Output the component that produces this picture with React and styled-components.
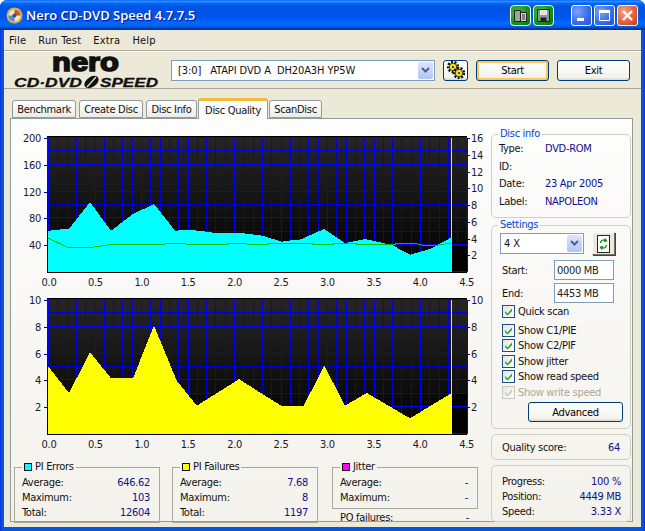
import React from "react";
import styled, { createGlobalStyle } from "styled-components";

const UI = `"DejaVu Sans Condensed", "Liberation Sans", sans-serif`;
const TXT = `11px ${UI}`;
const NAVY = "#10108a";

const Global = createGlobalStyle`
  html, body { margin: 0; padding: 0; background: #fff; }
  body { width: 645px; height: 531px; overflow: hidden; font: ${TXT}; letter-spacing: -0.3px; color: #111; }
  * { box-sizing: border-box; }
  button { letter-spacing: inherit; }
`;

const Win = styled.div`
  width: 645px; height: 531px; display: flex; flex-direction: column;
  background: linear-gradient(90deg, #0831d9 0, #0855dd 2px, #0855dd 643px, #0831d9 645px);
  border-radius: 7px 7px 0 0; overflow: hidden;
`;
const TitleBar = styled.div`
  height: 30px; flex: none; display: flex; align-items: center; padding: 0 7px 0 6px;
  background: linear-gradient(180deg,#0058ee 0%,#3593ff 4%,#288eff 6%,#127dff 8%,#036ffc 10%,#0262ee 14%,#0057e5 20%,#0054e3 24%,#0055eb 56%,#005bf5 66%,#026afe 76%,#0062ef 86%,#0052d6 92%,#0040ab 94%,#003092 100%);
`;
const TitleText = styled.div`
  margin-left: 3px; flex: 1; color: #fff; font: 600 13px "Open Sans", sans-serif; letter-spacing: 0;
  text-shadow: 1px 1px 1px #0f1089;
`;
const SkinBtn = styled.div`
  width: 21px; height: 21px; border: 1px solid #fff; border-radius: 4px; margin-right: ${p => p.$mr || 2}px;
  display: flex; align-items: center; justify-content: center;
  background: radial-gradient(circle at 35% 35%, #4cc04c, #0e8a12 70%, #066a0a);
`;
const CtlBtn = styled.div`
  width: 21px; height: 21px; border: 1px solid #fff; border-radius: 3px; margin-left: 2px;
  display: flex; align-items: center; justify-content: center;
  background: ${p => p.$close
    ? "radial-gradient(circle at 30% 30%, #f0a58c, #e2633f 55%, #c23a1c)"
    : "radial-gradient(circle at 30% 30%, #7fa4f5, #3b6fe6 55%, #2350cf)"};
`;
const Client = styled.div`
  margin: 0 4px 4px; flex: 1; background: #ece9d8; display: flex; flex-direction: column;
`;
const MenuBar = styled.div`
  height: 21px; flex: none; display: flex; align-items: center; padding: 0 5px; gap: 12px;
  border-bottom: 1px solid #aca899; letter-spacing: 0.2px;
`;
const Toolbar = styled.div`
  height: 38px; flex: none; display: flex; align-items: center; padding-left: 10px;
  border-top: 1px solid #fff; border-bottom: 1px solid #aca899;
`;
const Logo = styled.svg`
  width: 157px; height: 37px; flex: none; display: block; overflow: visible;
  text { letter-spacing: 0; font-family: "Liberation Sans", sans-serif; font-weight: 700; fill: #111; stroke: #111; }
`;
const LogoMark = styled.text`font-size: 25px; stroke-width: 1.5px;`;
const LogoLine = styled.text`font-size: 12.5px; font-style: italic; stroke-width: 0.3px;`;
const Combo = styled.div`
  width: ${p => p.$w}px; height: 21px; flex: none; display: flex; align-items: center;
  background: #fff; border: 1px solid #7f9db9; padding: 0 1px 0 ${p => p.$pl}px; letter-spacing: -0.1px;
  span { flex: 1; white-space: pre; }
`;
const ComboArrow = styled.div`
  width: 15px; height: 17px; border-radius: 2px; display: flex; align-items: center; justify-content: center;
  background: linear-gradient(180deg, #dbe5fd, #b0c6f7);
`;
const XpBtn = styled.button`
  width: ${p => p.$w}px; height: ${p => p.$h || 21}px; flex: none; padding: 0; margin: ${p => p.$mt || 0}px 0 0 ${p => p.$ml || 0}px;
  border: 1px solid #003c74; border-radius: 3px; font: ${TXT}; color: #000;
  display: flex; align-items: center; justify-content: center;
  background: linear-gradient(180deg, #fff, #f4f3ee 85%, #dcd8ca);
  box-shadow: ${p => p.$def ? "inset 0 0 0 2px #fbc761" : "none"};
`;
const Tabs = styled.div`
  height: 30px; flex: none; padding: 9px 0 0 8px; display: flex; align-items: flex-end;
  margin-bottom: -1px; position: relative; z-index: 1;
`;
const Tab = styled.div`
  width: ${p => p.$w}px; height: ${p => p.$on ? 21 : 18}px; margin-right: ${p => p.$mr}px;
  margin-bottom: ${p => p.$on ? 0 : 1}px; white-space: nowrap;
  border: 1px solid #919b9c; border-bottom: ${p => p.$on ? "0" : "1px solid #919b9c"};
  border-radius: 3px 3px 0 0; display: flex; align-items: center; justify-content: center;
  background: ${p => p.$on ? "#fcfcfb" : "linear-gradient(180deg,#fff,#ecebe6)"};
  ${p => p.$on && "border-top: 3px solid #f6b73c;"}
`;
const Panel = styled.div`
  width: 623px; margin-left: 6px; height: 404px; flex: none; display: flex; border: 1px solid #919b9c;
  background: linear-gradient(180deg, #fdfdfd, #f4f2ec);
`;
const LeftCol = styled.div`width: 480px; flex: none; padding-top: 10px;`;
const Chart = styled.svg`
  display: block; width: 478px; height: 160px; margin-left: 1px;
  text { font: ${TXT}; fill: #1a1a2c; }
`;
const StatsRow = styled.div`display: flex; padding-left: 3px; margin-top: 11px; align-items: flex-start;`;
const StatCol = styled.div`width: 146px; margin-right: ${p => p.$mr || 0}px; flex: none;`;
const StatBox = styled.fieldset`
  margin: 0; padding: 1px 9px 0 7px; width: 146px; height: ${p => p.$h}px; min-width: 0;
  border: 1px solid #aca899;
  legend { padding: 0 2px; margin-left: 0; height: 14px; display: flex; align-items: center; gap: 3px; line-height: 14px; }
`;
const Swatch = styled.i`width: 8px; height: 8px; border: 1px solid #111; background: ${p => p.$c}; display: block;`;
const KV = styled.div`
  height: ${p => p.$h || 15}px; display: flex; justify-content: space-between; align-items: center;
  padding: ${p => p.$pad || "0"};
  b { font-weight: 400; color: ${NAVY}; }
`;
const Side = styled.div`width: 140px; flex: none; padding-top: 8px;`;
const Group = styled.fieldset`
  margin: ${p => p.$mt || 0}px 0 0; width: 140px; height: ${p => p.$h}px; min-width: 0;
  border: 1px solid #d0d0bf; border-radius: 5px; padding: ${p => p.$pad};
  legend { padding: 0 2px; margin: 0 0 ${p => p.$lb || 0}px -1px; color: #0046d5; line-height: 14px; height: 14px; }
`;
const InfoRow = styled.div`
  height: 17.6px; display: flex; align-items: center;
  span { width: 46px; flex: none; }
  b { font-weight: 400; color: ${NAVY}; }
`;
const SpeedRow = styled.div`display: flex; align-items: center; padding-left: 1px;`;
const Bevel = styled.div`
  width: 23px; height: 23px; margin-left: 8px; display: flex; align-items: center; justify-content: center;
  background: #ece9d8; border: 1px solid; border-color: #fff #716f64 #716f64 #fff; box-shadow: 1px 1px 0 #444;
`;
const FieldRow = styled.div`
  display: flex; align-items: center; margin-top: ${p => p.$mt}px; padding-left: 3px;
  span { width: 52px; flex: none; }
`;
const Field = styled.div`
  width: 60px; height: 20px; background: #fff; border: 1px solid #7f9db9; padding-left: 2px; display: flex; align-items: center;
  color: #222;
`;
const CheckRow = styled.div`
  height: 15.5px; margin-top: ${p => p.$mt || 0}px; display: flex; align-items: center; padding-left: 3px; gap: 3px;
  color: ${p => p.$off ? "#aca899" : "#111"};
`;
const Box = styled.span`
  width: 13px; height: 13px; flex: none; display: flex; align-items: center; justify-content: center;
  border: 1px solid ${p => p.$off ? "#c9c7ba" : "#1c5180"};
  background: linear-gradient(135deg, #e4e4df, #fff);
`;

const Check = ({ off }) => (
  <Box $off={off}>
    <svg width="9" height="9" viewBox="0 0 9 9"><path d="M1 4l2.500 2.500L8 1.500v2.500L3.500 8.500 1 6z" fill={off ? "#c9c7ba" : "#21a121"} /></svg>
  </Box>
);
const Chevron = () => (
  <svg width="9" height="7" viewBox="0 0 9 7"><path d="M1 1l3.500 3.500L8 1" fill="none" stroke="#4d6185" strokeWidth="2" /></svg>
);

const cyan = "47.7,273 47.7,232 55,231 69,229.7 90,203.3 111,231.7 133,215 154,205 175,231.7 187,231 200,231.7 215,234 245,234.500 262,236.7 282,242.7 288,241.7 300,240.7 324,230 345,244 365,240 392,246 410,255.7 430,250 451.7,238.3 451.7,273";
const green = "47.7,239 68,248.3 91.7,248.3 110,245.7 163,245.7 167,244.3 185,244.3 187,245.7 227,245.7 228,244.3 245,244.3 248,245.3 268,245.3 270,244.3 312,244.3 313,245.3 333,245.3 335,244.3 355,244.3 357,245.3 392,246 398,244.3 415,244.3 425,246.7 435,246.7 448,244.3 451,244.3";
const yellow = "47.7,435 47.7,366.7 69,394 90,353.3 111,379.3 133,379.3 154,326.7 176.7,381.7 196.7,406.7 239.3,380 245,384 281,406.7 303.7,406.7 324.3,366.7 345,406.7 366.7,394 410,419.3 451.7,394 451.7,435";
const xVals = ["0.0","0.5","1.0","1.5","2.0","2.5","3.0","3.5","4.0","4.5"];

const Plot = ({ id, vy, top, bottom, left, right, area, fill, line, whiteTo, clearFrom, keep }) => {
  const H = bottom - top - 2;
  const step = H / 10;
  const xs = Array.from({ length: 46 }, (_, i) => i);
  const ys = Array.from({ length: 11 }, (_, i) => i);
  const major = "#0000ff";
  const minor = "#0000d8";
  return (
    <Chart viewBox={`12 ${vy} 478 160`}>
      <defs>
        <linearGradient id={id} x1="0" y1="0" x2="0" y2="1">
          <stop offset="0" stopColor="#262626" /><stop offset="1" stopColor="#000" />
        </linearGradient>
      </defs>
      <rect x="47" y={top} width="420" height={bottom - top + 1} fill={`url(#${id})`} />
      <rect x="47" y={top} width="420" height="2" fill="#000" />
      <g shapeRendering="crispEdges">
        {xs.map(i => {
          const x = Math.round(48 + i * 9.3) + 0.5;
          return <line key={i} x1={x} x2={x} y1={top + 2} y2={bottom} stroke={i % 5 === 0 ? major : minor} />;
        })}
        {ys.map(i => {
          const y = Math.round(top + 2 + i * step) - 0.5;
          return <line key={i} x1="47" x2="467" y1={y} y2={y} stroke={i % 2 === 0 ? major : minor} />;
        })}
        <rect x="452" y={clearFrom} width="15" height={bottom - clearFrom} fill="#000" />
        <line x1="452" x2="467" y1={keep} y2={keep} stroke={major} />
        <line x1="452" x2="467" y1={bottom - 0.5} y2={bottom - 0.5} stroke={major} />
        <polygon points={area} fill={fill} />
        {line && <polyline points={line} fill="none" stroke="#00c000" />}
        <line x1="451.5" x2="451.5" y1={top + 2} y2={whiteTo} stroke="#d8d8d8" />
        <line x1="47" x2="467" y1={bottom + 0.5} y2={bottom + 0.5} stroke="#000" />
        {right.map((v, i) => {
          const y = Math.round(top + 2 + H * (i / right.length)) + 0.5;
          return <line key={v} x1="467" x2="470" y1={y} y2={y} stroke="#000090" />;
        })}
        {left.map((v, i) => {
          const y = Math.round(top + 2 + H * (i / left.length)) + 0.5;
          return <line key={v} x1="44" x2="47" y1={y} y2={y} stroke="#000090" />;
        })}
      </g>
      {left.map((v, i) => (
        <text key={v} x="41" y={top + 6 + i * (H / left.length)} textAnchor="end">{v}</text>
      ))}
      {right.map((v, i) => (
        <text key={v} x="471" y={top + 6 + H * (i / right.length)}>{v}</text>
      ))}
      {xVals.map((v, i) => (
        <text key={v} x={49 + i * 46.4} y={bottom + 13.5} textAnchor="middle">{v}</text>
      ))}
    </Chart>
  );
};

const Stat = ({ c, title, rows, h }) => (
  <StatBox $h={h}>
    <legend><Swatch $c={c} />{title}</legend>
    {rows.map(([k, v]) => <KV key={k}><span>{k}</span><b>{v}</b></KV>)}
  </StatBox>
);

export default function App() {
  return (
    <Win>
      <Global />
      <TitleBar>
        <svg width="17" height="17" viewBox="0 0 17 17">
          <circle cx="8.500" cy="8.500" r="8" fill="#d8b048" />
          <circle cx="8.500" cy="8.500" r="6" fill="#eee6c8" />
          <path d="M8.500 2.500a6 6 0 0 1 6 6H8.500z" fill="#c8562c" />
          <path d="M8.500 14.500a6 6 0 0 1-6-6h6z" fill="#5f86c8" />
          <circle cx="8.500" cy="8.500" r="2" fill="#2a4fa0" />
        </svg>
        <TitleText>Nero CD-DVD Speed 4.7.7.5</TitleText>
        <SkinBtn>
          <svg width="15" height="15" viewBox="0 0 15 15">
            <path d="M1.500 2.500h6v11h-6z" fill="#9aa79a" stroke="#222" />
            <path d="M7.500 4.500h6v9h-6z" fill="#c9d3c9" stroke="#222" />
            <path d="M9 7h3M9 9h3M9 11h3" stroke="#333" />
          </svg>
        </SkinBtn>
        <SkinBtn $mr={15}>
          <svg width="15" height="15" viewBox="0 0 15 15">
            <path d="M1.500 1.500h12v12h-12z" fill="#8d9a8d" stroke="#222" />
            <path d="M4 2h7v5H4z" fill="#dfe6df" />
            <path d="M4.500 9.500h6v4h-6z" fill="#222" />
          </svg>
        </SkinBtn>
        <CtlBtn>
          <svg width="13" height="13" viewBox="0 0 13 13"><rect x="2" y="9" width="7" height="3" fill="#fff" /></svg>
        </CtlBtn>
        <CtlBtn>
          <svg width="13" height="13" viewBox="0 0 13 13"><path d="M1.500 3.500h10v8h-10z" fill="none" stroke="#fff" /><rect x="1" y="1" width="11" height="3" fill="#fff" /></svg>
        </CtlBtn>
        <CtlBtn $close>
          <svg width="13" height="13" viewBox="0 0 13 13"><path d="M2 2l9 9M11 2l-9 9" stroke="#fff" strokeWidth="2.400" /></svg>
        </CtlBtn>
      </TitleBar>
      <Client>
        <MenuBar><span>File</span><span>Run Test</span><span>Extra</span><span>Help</span></MenuBar>
        <Toolbar>
          <Logo viewBox="14 52 157 37">
            <LogoMark x="52" y="71" textLength="67" lengthAdjust="spacingAndGlyphs">nero</LogoMark>
            <LogoLine x="14" y="87" textLength="68" lengthAdjust="spacingAndGlyphs">CD·DVD</LogoLine>
            <ellipse cx="91.500" cy="82" rx="8" ry="5" fill="#111" transform="rotate(-35 91.500 82)" />
            <path d="M87 87l9-10" stroke="#ece9d8" strokeWidth="1.200" />
            <LogoLine x="100" y="87" textLength="58" lengthAdjust="spacingAndGlyphs">SPEED</LogoLine>
          </Logo>
          <Combo $w={264} $pl={6}>
            <span>[3:0]   ATAPI DVD A  DH20A3H YP5W</span>
            <ComboArrow><Chevron /></ComboArrow>
          </Combo>
          <XpBtn $w={25} $ml={8}>
            <svg width="18" height="18" viewBox="0 0 18 18">
              <circle cx="6" cy="6" r="5" fill="none" stroke="#111" strokeWidth="2.400" strokeDasharray="2 1.500" />
              <circle cx="6" cy="6" r="3.800" fill="#f2e21a" stroke="#111" strokeWidth=".8" />
              <circle cx="12" cy="12" r="5" fill="none" stroke="#111" strokeWidth="2.400" strokeDasharray="2 1.500" />
              <circle cx="12" cy="12" r="3.800" fill="#f2e21a" stroke="#111" strokeWidth=".8" />
              <circle cx="6" cy="6" r="1" fill="#111" /><circle cx="12" cy="12" r="1" fill="#111" />
            </svg>
          </XpBtn>
          <XpBtn $w={73} $ml={8} $def>Start</XpBtn>
          <XpBtn $w={73} $ml={8}>Exit</XpBtn>
        </Toolbar>
        <Tabs>
          <Tab $w={64} $mr={3}>Benchmark</Tab>
          <Tab $w={64} $mr={3}>Create Disc</Tab>
          <Tab $w={51} $mr={1}>Disc Info</Tab>
          <Tab $w={70} $mr={1} $on>Disc Quality</Tab>
          <Tab $w={53} $mr={0}>ScanDisc</Tab>
        </Tabs>
        <Panel>
          <LeftCol>
            <Plot id="a" vy={130} top={137} bottom={273} clearFrom={247} keep={246.5}
              left={["200","160","120","80","40"]} right={["16","14","12","10","8","6","4","2"]}
              area={cyan} fill="#00ffff" line={green} whiteTo={239} />
            <Plot id="b" vy={290} top={299} bottom={435} clearFrom={395} keep={407.5}
              left={["10","8","6","4","2"]} right={["10","8","6","4","2"]}
              area={yellow} fill="#ffff00" whiteTo={394} />
            <StatsRow>
              <StatCol $mr={12}>
                <Stat c="#00ffff" title="PI Errors" h={63} rows={[["Average:","646.62"],["Maximum:","103"],["Total:","12604"]]} />
              </StatCol>
              <StatCol $mr={14}>
                <Stat c="#ffff00" title="PI Failures" h={63} rows={[["Average:","7.68"],["Maximum:","8"],["Total:","1197"]]} />
              </StatCol>
              <StatCol>
                <Stat c="#ff00ff" title="Jitter" h={49} rows={[["Average:","-"],["Maximum:","-"]]} />
                <KV $pad="0 9px 0 8px" $h={16}><span>PO failures:</span><b>-</b></KV>
              </StatCol>
            </StatsRow>
          </LeftCol>
          <Side>
            <Group $h={91} $pad="0 6px 0 7px" $lb={-1}>
              <legend>Disc info</legend>
              <InfoRow><span>Type:</span><b>DVD-ROM</b></InfoRow>
              <InfoRow><span>ID:</span></InfoRow>
              <InfoRow><span>Date:</span><b>23 Apr 2005</b></InfoRow>
              <InfoRow><span>Label:</span><b>NAPOLEON</b></InfoRow>
            </Group>
            <Group $h={211} $pad="2px 6px 0 7px" $lb={-2}>
              <legend>Settings</legend>
              <SpeedRow>
                <Combo $w={84} $pl={3}><span>4 X</span><ComboArrow><Chevron /></ComboArrow></Combo>
                <Bevel>
                  <svg width="15" height="18" viewBox="0 0 15 18">
                    <rect x="1.500" y="0.500" width="12" height="17" fill="#fff" stroke="#222" />
                    <path d="M4.500 8a3.200 3.200 0 0 1 5-2.500M9 3.500l1.500 2.300-2.600.5" fill="none" stroke="#0a8a0a" strokeWidth="1.300" />
                    <path d="M10.500 10a3.200 3.200 0 0 1-5 2.500M6 14.500l-1.500-2.300 2.600-.5" fill="none" stroke="#0a8a0a" strokeWidth="1.300" />
                  </svg>
                </Bevel>
              </SpeedRow>
              <FieldRow $mt={5}><span>Start:</span><Field>0000 MB</Field></FieldRow>
              <FieldRow $mt={3}><span>End:</span><Field>4453 MB</Field></FieldRow>
              <CheckRow $mt={1}><Check />Quick scan</CheckRow>
              <CheckRow $mt={3}><Check />Show C1/PIE</CheckRow>
              <CheckRow><Check />Show C2/PIF</CheckRow>
              <CheckRow><Check />Show jitter</CheckRow>
              <CheckRow><Check />Show read speed</CheckRow>
              <CheckRow $off><Check off />Show write speed</CheckRow>
              <XpBtn $w={95} $h={20} $ml={29} $mt={2}>Advanced</XpBtn>
            </Group>
            <Group $h={26} $mt={5} $pad="0 10px 0 10px">
              <KV $h={24}><span>Quality score:</span><b>64</b></KV>
            </Group>
            <Group $h={57} $mt={5} $pad="7px 9px 0 10px">
              <KV $h={16}><span>Progress:</span><b>100 %</b></KV>
              <KV $h={15}><span>Position:</span><b>4449 MB</b></KV>
              <KV $h={15}><span>Speed:</span><b>3.33 X</b></KV>
            </Group>
          </Side>
        </Panel>
      </Client>
    </Win>
  );
}
